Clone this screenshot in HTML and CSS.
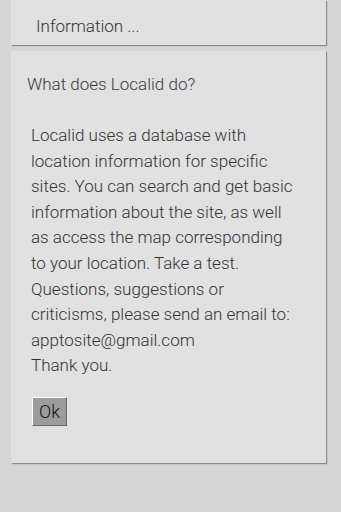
FILE: index.html
```html
<!DOCTYPE html>
<html>
<head>
<meta charset="utf-8">
<link rel="stylesheet" href="styles.css">
</head>
<body>
<div class="page">
  <div class="card top-card">
    <div class="info">Information ...</div>
  </div>
  <div class="card dialog">
    <div class="title">What does Localid do?</div>
    <div class="body">Localid uses a database with location information for specific sites. You can search and get basic information about the site, as well as access the map corresponding to your location. Take a test. Questions, suggestions or criticisms, please send an email to: apptosite@gmail.com<br>Thank you.</div>
    <button class="ok">Ok</button>
  </div>
</div>
</body>
</html>
```
FILE: styles.css
```css
html, body {
  margin: 0;
  padding: 0;
  background: #d6d6d6;
  width: 341px;
  height: 512px;
  overflow: hidden;
  font-family: Roboto, "Noto Sans", sans-serif;
}
.page {
  display: flex;
  flex-direction: column;
  gap: 6px;
  padding: 0 15px 0 11px;
}
.card {
  background: #e1e1e1;
  box-shadow: 1px 1px 1px rgba(0,0,0,0.35);
}
.top-card {
  height: 45px;
  display: flex;
  align-items: flex-end;
}
.info {
  font-size: 17px;
  color: #333;
  padding: 0 0 9px 25px;
  font-weight: 300;
}
.dialog {
  height: 412px;
  padding: 23px 0 0 16px;
  box-sizing: border-box;
}
.title {
  font-size: 17px;
  color: #3a3a3a;
  font-weight: 300;
}
.body {
  margin-top: 29px;
  padding-left: 4px;
  font-size: 17px;
  line-height: 25.6px;
  color: #333;
  font-weight: 300;
  width: 270px;
}
.ok {
  margin: 18px 0 0 5px;
  width: 35px;
  height: 29px;
  padding: 0;
  background: #9c9c9c;
  border: 1px solid;
  border-color: #fff #666 #666 #fff;
  font-family: Roboto, sans-serif;
  font-size: 18px;
  font-weight: 300;
  color: #111;
  display: block;
}
```
